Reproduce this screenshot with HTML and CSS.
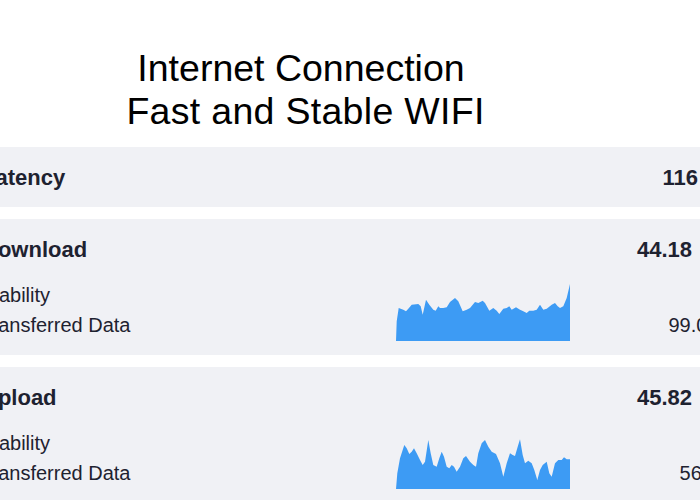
FILE: index.html
```html
<!DOCTYPE html>
<html>

<head>
    <meta charset="UTF-8">
    <title>Internet Connection</title>
    <link rel="stylesheet" href="styles.css">
</head>

<body>

    <div id="page">
        <h1 id="title">
            <span class="title-line">Internet Connection</span>
            <span class="title-line title-sub">Fast and Stable WIFI</span>
        </h1>

        <div class="card card-plain">
            <div class="card-head">
                <span>Latency</span>
                <span class="value">116<span class="unit unit-short">ms</span></span>
            </div>
        </div>

        <div class="card">
            <div class="card-head">
                <span>Download</span>
                <span class="value">44.18<span class="unit">Mbps</span></span>
            </div>
            <div class="stats">
                <ul class="labels">
                    <li>Stability</li>
                    <li>Transferred Data</li>
                </ul>
                <svg class="chart" width="174" height="58" viewBox="0 0 174 58">
                    <path d="M0 58 L0.7 38.3 L2.7 25 L7.3 26.7 L10 28.3 L12.3 25.7 L15.7 21.7 L22.3 21 L24.7 23.3 L26.7 31.7 L30 16.7 L33.3 21.7 L37.3 26.7 L39.7 27.7 L42.3 23.3 L44 25 L47.3 25 L50.7 24.3 L54 19 L59 15 L62.3 18.3 L66.7 28.3 L70.7 26.7 L74 25 L79 19 L82.3 20 L86.7 17.7 L89 20 L93.3 27.7 L97.3 25 L100.7 27.7 L103.3 31 L107.3 25.7 L110.7 25 L113.3 23.3 L115.7 26.7 L120 24.3 L124 26.7 L127.3 28.3 L130.7 30 L133.3 27.7 L137.3 27.7 L140.7 26.7 L144 21.7 L147.3 26.7 L150.7 25.7 L155.7 21.7 L159 20 L161.7 23.3 L164 25 L167.3 23.3 L170.7 15 L174 1 L174 58 Z" />
                </svg>
                <ul class="numbers">
                    <li>98 %</li>
                    <li>99.07 MB</li>
                </ul>
            </div>
        </div>

        <div class="card">
            <div class="card-head">
                <span>Upload</span>
                <span class="value">45.82<span class="unit">Mbps</span></span>
            </div>
            <div class="stats">
                <ul class="labels">
                    <li>Stability</li>
                    <li>Transferred Data</li>
                </ul>
                <svg class="chart" width="174" height="58" viewBox="0 0 174 58">
                    <path d="M0 58 L1.3 42.3 L4 27.3 L8.3 14 L10.7 17.3 L13.3 23 L15.7 20.7 L18 17.3 L20.7 22.3 L24 29 L26.7 34 L29 30.7 L32.3 9 L34.7 22.3 L37.3 34 L40.7 35.7 L43.3 27.3 L45.7 20.7 L48 25.7 L50.7 35.7 L53.3 37.3 L55.7 34 L58 35.7 L60.7 40.7 L64 35.7 L67.3 27.3 L70 25 L74 30.7 L77.3 34 L80 35.7 L82.3 22.3 L85.7 12.3 L89 9 L92.3 15.7 L95.7 20.7 L100 23 L104 32.3 L107.3 45.7 L110.7 32.3 L114 22.3 L116.7 24 L119 25 L121.7 15.7 L124 8.3 L126.7 24 L129 32.3 L132.3 29.7 L135.7 32.3 L138.3 39 L141.3 49 L144 39 L146.7 34 L150.7 30.7 L153.3 42.3 L155.7 45.7 L159 32.3 L162.3 29 L165.7 29 L168 26.3 L170.7 28.3 L174 28.3 L174 58 Z" />
                </svg>
                <ul class="numbers">
                    <li>97 %</li>
                    <li>56.3 MB</li>
                </ul>
            </div>
        </div>
    </div>

</body>

</html>
```

FILE: styles.css
```css
* {
    margin: 0;
    padding: 0;
}

body {
    background: #ffffff;
    font-family: "Liberation Sans", Arial, sans-serif;
    color: #1e2230;
    overflow: hidden;
}

#page {
    width: 810px;
    margin-left: -40px;
    padding-top: 47px;
}

#title {
    font-size: 37.5px;
    font-weight: normal;
    line-height: 43px;
    color: #000000;
    text-align: center;
    padding-right: 128px;
    margin-bottom: 14px;
}

.title-line {
    display: block;
}

.title-sub {
    padding-left: 9px;
    letter-spacing: 0.3px;
}

.card {
    background: #f0f1f5;
    padding: 18px 16px 15px 22px;
    margin-bottom: 12px;
}

.card-plain {
    padding-bottom: 16px;
}

.card-head {
    display: flex;
    justify-content: space-between;
    font-size: 22px;
    font-weight: bold;
    line-height: 26px;
}

.unit {
    display: inline-block;
    width: 62px;
    padding-left: 12px;
    box-sizing: border-box;
    font-size: 20px;
    font-weight: normal;
}

.unit-short {
    width: 56px;
}

.stats {
    display: grid;
    grid-template-columns: 414px 174px 1fr;
    align-items: end;
    margin-top: 17px;
}

.labels,
.numbers {
    list-style: none;
    font-size: 20px;
    line-height: 30px;
}

.labels {
    margin-left: -2px;
}

.numbers {
    text-align: right;
}

.chart {
    display: block;
    margin-bottom: -1px;
}

.chart path {
    fill: #3d9bf4;
}
```
